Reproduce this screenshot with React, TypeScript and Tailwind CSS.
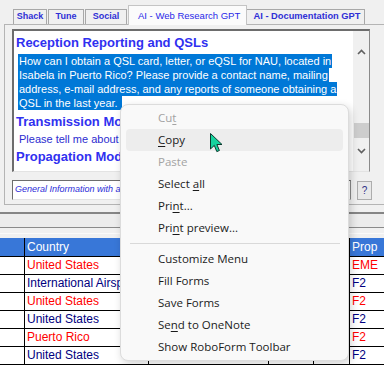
import React from 'react';

const tabs = [
  { label: 'Shack', w: 'w-[34px]' },
  { label: 'Tune', w: 'w-[36px]' },
  { label: 'Social', w: 'w-[42px]' },
];

const selected = [
  'How can I obtain a QSL card, letter, or eQSL for NAU, located in',
  'Isabela in Puerto Rico? Please provide a contact name, mailing',
  'address, e-mail address, and any reports of someone obtaining a',
  'QSL in the last year.\u00a0',
];

const rows = [
  { country: 'United States', prop: 'EME', red: true },
  { country: 'International Airspace', prop: 'F2', red: false },
  { country: 'United States', prop: 'F2', red: true },
  { country: 'United States', prop: 'F2', red: false },
  { country: 'Puerto Rico', prop: 'F2', red: true },
  { country: 'United States', prop: 'F2', red: false },
];

type Item = { label: React.ReactNode; disabled?: boolean; hover?: boolean };

const u = (s: string) => <span className="underline underline-offset-[2px]">{s}</span>;

const menuTop: Item[] = [
  { label: <>Cu{u('t')}</>, disabled: true },
  { label: <>{u('C')}opy</>, hover: true },
  { label: <>Paste</>, disabled: true },
  { label: <>Select {u('a')}ll</> },
  { label: <>Pri{u('n')}t...</> },
  { label: <>Pri{u('n')}t preview...</> },
];

const menuBottom: Item[] = [
  { label: <>Customize Menu</> },
  { label: <>Fill Forms</> },
  { label: <>Save Forms</> },
  { label: <>Se{u('n')}d to OneNote</> },
  { label: <>Show RoboForm Toolbar</> },
];

const MenuRow = ({ item }: { item: Item }) => (
  <div
    className={`mx-[5px] h-[22px] flex items-center pl-[32px] rounded-[4px] ${
      item.hover ? 'bg-[#ededed]' : ''
    } ${item.disabled ? 'text-[#a3a3a3]' : 'text-[#1b1b1b]'}`}
  >
    <span className="whitespace-pre">{item.label}</span>
  </div>
);

const App = () => {
  return (
    <div className="w-[384px] h-[365px] overflow-hidden bg-[#f0f0f0] relative font-['Liberation_Sans',Arial,sans-serif]">
      {/* Tabs */}
      <div className="pt-[5px] pl-[4px]">
        <div className="flex items-end h-[19px] pl-[9px] relative z-10">
          {tabs.map((t) => (
            <div
              key={t.label}
              className={`${t.w} h-[15px] mr-[1px] border border-b-0 border-[#a8a8a8] bg-[#f0f0f0] flex items-center justify-center text-[9px] font-bold text-[#2f2fd6]`}
            >
              {t.label}
            </div>
          ))}
          <div className="w-[119px] h-[20px] -mb-[1px] border border-b-0 border-[#c4c4c4] bg-[#fbfbfb] flex items-start pt-[3px] pl-[9px] text-[9.5px] text-[#2a2ae8]">
            AI - Web Research GPT
          </div>
          <div className="w-[118px] h-[15px] border border-b-0 border-l-0 border-[#a8a8a8] bg-[#f0f0f0] flex items-center justify-center text-[9.3px] font-bold text-[#2f2fd6] pl-[3px]">
            AI - Documentation GPT
          </div>
        </div>

        {/* Panel */}
        <div className="w-[400px] h-[181px] border-t border-l border-b border-[#b4b4b4] bg-[#f0f0f0] pl-[7px] pt-[4px]">
          {/* Text box */}
          <div className="w-[358px] h-[143px] border-t-2 border-l-2 border-t-[#6d6d6d] border-l-[#6d6d6d] border-b border-r border-b-[#e3e3e3] border-r-[#8a8a8a] flex">
            <div className="flex-1 bg-white overflow-hidden pl-[2px]">
              <div className="mt-[3px] h-[18px] leading-[18px] text-[13px] font-bold text-[#3030f0] whitespace-nowrap">
                Reception Reporting and QSLs
              </div>
              <div className="mt-[2px] pl-[2px] text-[11px] leading-[14px]">
                {selected.map((line) => (
                  <div key={line} className="flex h-[14px]">
                    <span className="h-[14px] leading-[14px] bg-[#0078d7] text-white pl-[1px] pr-[1px] whitespace-pre">
                      {line}
                    </span>
                  </div>
                ))}
              </div>
              <div className="mt-[3px] h-[18px] leading-[18px] text-[13px] font-bold text-[#3030f0] whitespace-nowrap">
                Transmission Modes
              </div>
              <div className="mt-[1px] pl-[3px] h-[14px] leading-[14px] text-[11px] text-[#2c2cd0] whitespace-nowrap">
                Please tell me about the transmission modes used by NAU.
              </div>
              <div className="mt-[2px] h-[18px] leading-[18px] text-[13px] font-bold text-[#3030f0] whitespace-nowrap">
                Propagation Modes
              </div>
              <div className="mt-[2px] pl-[3px] h-[14px] leading-[14px] text-[11px] text-[#2c2cd0] whitespace-nowrap">
                Please tell me about the propagation modes used by NAU.
              </div>
            </div>
            {/* Scrollbar */}
            <div className="w-[16px] bg-[#f0f0f0] flex flex-col items-center">
              <svg className="mt-[18px]" width="9" height="6" viewBox="0 0 9 6">
                <path d="M1 5 L4.5 1.5 L8 5" fill="none" stroke="#606060" strokeWidth="1.6" />
              </svg>
              <div className="mt-[68px] w-[15px] h-[15px] bg-[#cdcdcd]" />
              <svg className="mt-[10px]" width="9" height="6" viewBox="0 0 9 6">
                <path d="M1 1 L4.5 4.5 L8 1" fill="none" stroke="#606060" strokeWidth="1.6" />
              </svg>
            </div>
          </div>

          {/* Status row */}
          <div className="flex mt-[8px] h-[20px]">
            <div className="w-[339px] h-[20px] border-t border-l border-t-[#6d6d6d] border-l-[#6d6d6d] border-b border-r border-b-[#e3e3e3] border-r-[#8a8a8a] bg-white pl-[2px] flex items-center text-[9px] italic text-[#2a2ad8] whitespace-nowrap overflow-hidden">
              General Information with a Reception Report request
            </div>
            <div className="ml-[6px] mt-[1px] w-[15px] h-[19px] border border-[#adadad] bg-[#e8e8e8] flex items-center justify-center text-[10px] text-[#303088]">
              ?
            </div>
          </div>
        </div>
      </div>

      {/* Splitter */}
      <div className="h-[7px]" />
      <div className="h-[2px] bg-[#858585]" />
      <div className="h-[13px] bg-[#ececec]" />
      <div className="h-[1px] bg-[#8a8a8a]" />
      <div className="h-[5px]" />
      <div className="h-[1px] bg-[#fafafa]" />
      <div className="h-[4px]" />

      {/* Grid */}
      <div className="text-[12px]">
        <div className="flex h-[19px] border-b border-black bg-[#3877d8] text-white">
          <div className="w-[25px] border-r border-black" />
          <div className="w-[124px] border-r border-black pl-[2px] leading-[18px]">Country</div>
          <div className="w-[120px] border-r border-black" />
          <div className="w-[45px] border-r border-black" />
          <div className="w-[36px] border-r border-black" />
          <div className="flex-1 pl-[2px] leading-[18px]">Prop</div>
        </div>
        {rows.map((r, i) => (
          <div key={i} className="flex h-[18px] border-b border-black bg-white">
            <div className="w-[25px] border-r border-black" />
            <div
              className={`w-[124px] border-r border-black pl-[2px] leading-[17px] whitespace-nowrap overflow-hidden ${
                r.red ? 'text-[#ff0000]' : 'text-[#000080]'
              }`}
            >
              {r.country}
            </div>
            <div className="w-[120px] border-r border-black" />
            <div className="w-[45px] border-r border-black" />
            <div className="w-[36px] border-r border-black" />
            <div className={`flex-1 pl-[2px] leading-[17px] ${r.red ? 'text-[#ff0000]' : 'text-[#000080]'}`}>
              {r.prop}
            </div>
          </div>
        ))}
      </div>

      {/* Context menu */}
      <div className="absolute left-[120px] top-[104px] w-[229px] h-[257px] rounded-[8px] border border-[#dcdcdc] bg-[#f9f9f9] shadow-[2px_3px_8px_rgba(0,0,0,0.18)] pt-[2px] text-[11.5px] font-['Segoe_UI','Open_Sans',sans-serif]">
        {menuTop.map((it, i) => (
          <MenuRow key={i} item={it} />
        ))}
        <div className="h-[9px] flex items-center pl-[9px] pr-[8px]">
          <div className="h-[1px] w-full bg-[#d9d9d9]" />
        </div>
        {menuBottom.map((it, i) => (
          <MenuRow key={i} item={it} />
        ))}
      </div>

      {/* Mouse cursor */}
      <svg className="absolute left-[210px] top-[133px]" width="14" height="21" viewBox="0 0 14 21">
        <path
          d="M0.5 0.5 L0.5 16 L4.3 12.4 L6.8 18.6 L9.4 17.5 L6.9 11.5 L12 11.5 Z"
          fill="#16d39e"
          stroke="#0b3b2e"
          strokeWidth="1"
          strokeLinejoin="round"
        />
      </svg>
    </div>
  );
};

export default App;
